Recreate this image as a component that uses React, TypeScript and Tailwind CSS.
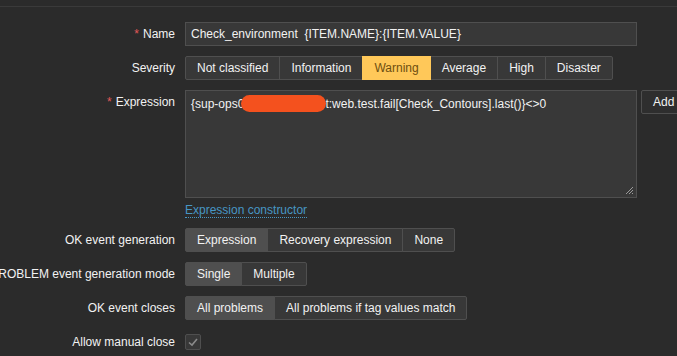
import React from 'react'

type Opt = { label: string; active?: boolean; warn?: boolean }

function Segmented({ options }: { options: Opt[] }) {
  return (
    <div className="flex h-[24px]">
      {options.map((o, i) => (
        <div
          key={o.label}
          className={`flex h-[24px] items-center border px-[11px] whitespace-nowrap ${i > 0 ? '-ml-px' : ''} ${
            i === 0 ? 'rounded-l-[2px]' : ''
          } ${i === options.length - 1 ? 'rounded-r-[2px]' : ''} ${
            o.warn
              ? 'relative z-10 border-[#ffc859] bg-[#ffc859] text-[#6e4e10]'
              : o.active
                ? 'border-[#4f4f4f] bg-[#4f4f4f] text-[#f2f2f2]'
                : 'border-[#4f4f4f] bg-[#383838] text-[#f2f2f2]'
          }`}
        >
          {o.label}
        </div>
      ))}
    </div>
  )
}

function Label({ text, required }: { text: string; required?: boolean }) {
  return (
    <div className="flex h-[24px] items-center justify-end self-start whitespace-nowrap text-[#f2f2f2]">
      {required && <span className="mr-[4px] text-[#e45959]">*</span>}
      <span>{text}</span>
    </div>
  )
}

export default function App() {
  return (
    <div
      className="h-[356px] w-full overflow-hidden bg-[#2b2b2b] text-[12px] leading-[14px]"
      style={{ fontFamily: '"Liberation Sans", Arial, sans-serif' }}
    >
      <div className="h-[6px]" />
      <div className="h-px bg-[#3a3a3a]" />
      <div className="grid grid-cols-[175px_1fr] gap-x-[10px] gap-y-[10px] pt-[15px]">
        <Label text="Name" required />
        <div className="flex h-[24px] w-[452px] items-center border border-[#4f4f4f] bg-[#383838] px-[5px] text-[#f2f2f2] whitespace-pre">
          {'Check_environment  {ITEM.NAME}:{ITEM.VALUE}'}
        </div>

        <Label text="Severity" />
        <Segmented
          options={[
            { label: 'Not classified' },
            { label: 'Information' },
            { label: 'Warning', warn: true },
            { label: 'Average' },
            { label: 'High' },
            { label: 'Disaster' },
          ]}
        />

        <Label text="Expression" required />
        <div>
          <div className="flex items-start gap-[4px]">
            <div className="relative h-[108px] w-[452px] shrink-0 border border-[#4f4f4f] bg-[#383838] px-[5px] pt-[4px] text-[#f2f2f2] whitespace-nowrap">
              <span>{'{sup-ops0'}</span>
              <span className="relative -ml-[3px] -mr-[1px] inline-block h-[17px] w-[85px] rounded-full bg-[#f4511e] align-[-4px]" />
              <span>{'t:web.test.fail[Check_Contours].last()}<>0'}</span>
              <svg className="absolute bottom-[2px] right-[2px]" width="9" height="9" viewBox="0 0 9 9">
                <path d="M8 1 L1 8 M8 4 L4 8 M8 7 L7 8" stroke="#9a9a9a" strokeWidth="1" />
              </svg>
            </div>
            <div className="flex h-[24px] shrink-0 items-center rounded-[2px] border border-[#4f4f4f] bg-[#2e2e2e] px-[11px] text-[#f2f2f2]">
              Add
            </div>
          </div>
          <div className="pt-[5px] leading-[15px]">
            <span className="border-b border-dotted border-[#4796c4] text-[#4796c4]">Expression constructor</span>
          </div>
        </div>

        <Label text="OK event generation" />
        <Segmented
          options={[{ label: 'Expression', active: true }, { label: 'Recovery expression' }, { label: 'None' }]}
        />

        <Label text="PROBLEM event generation mode" />
        <Segmented options={[{ label: 'Single', active: true }, { label: 'Multiple' }]} />

        <Label text="OK event closes" />
        <Segmented
          options={[{ label: 'All problems', active: true }, { label: 'All problems if tag values match' }]}
        />

        <Label text="Allow manual close" />
        <div className="flex h-[24px] items-center">
          <div className="flex h-[16px] w-[16px] items-center justify-center rounded-[2px] border border-[#4f4f4f] bg-[#383838]">
            <svg width="12" height="12" viewBox="0 0 12 12">
              <path d="M2 6.5 L5 9 L10 3" fill="none" stroke="#8a8a8a" strokeWidth="1.6" />
            </svg>
          </div>
        </div>
      </div>
    </div>
  )
}
